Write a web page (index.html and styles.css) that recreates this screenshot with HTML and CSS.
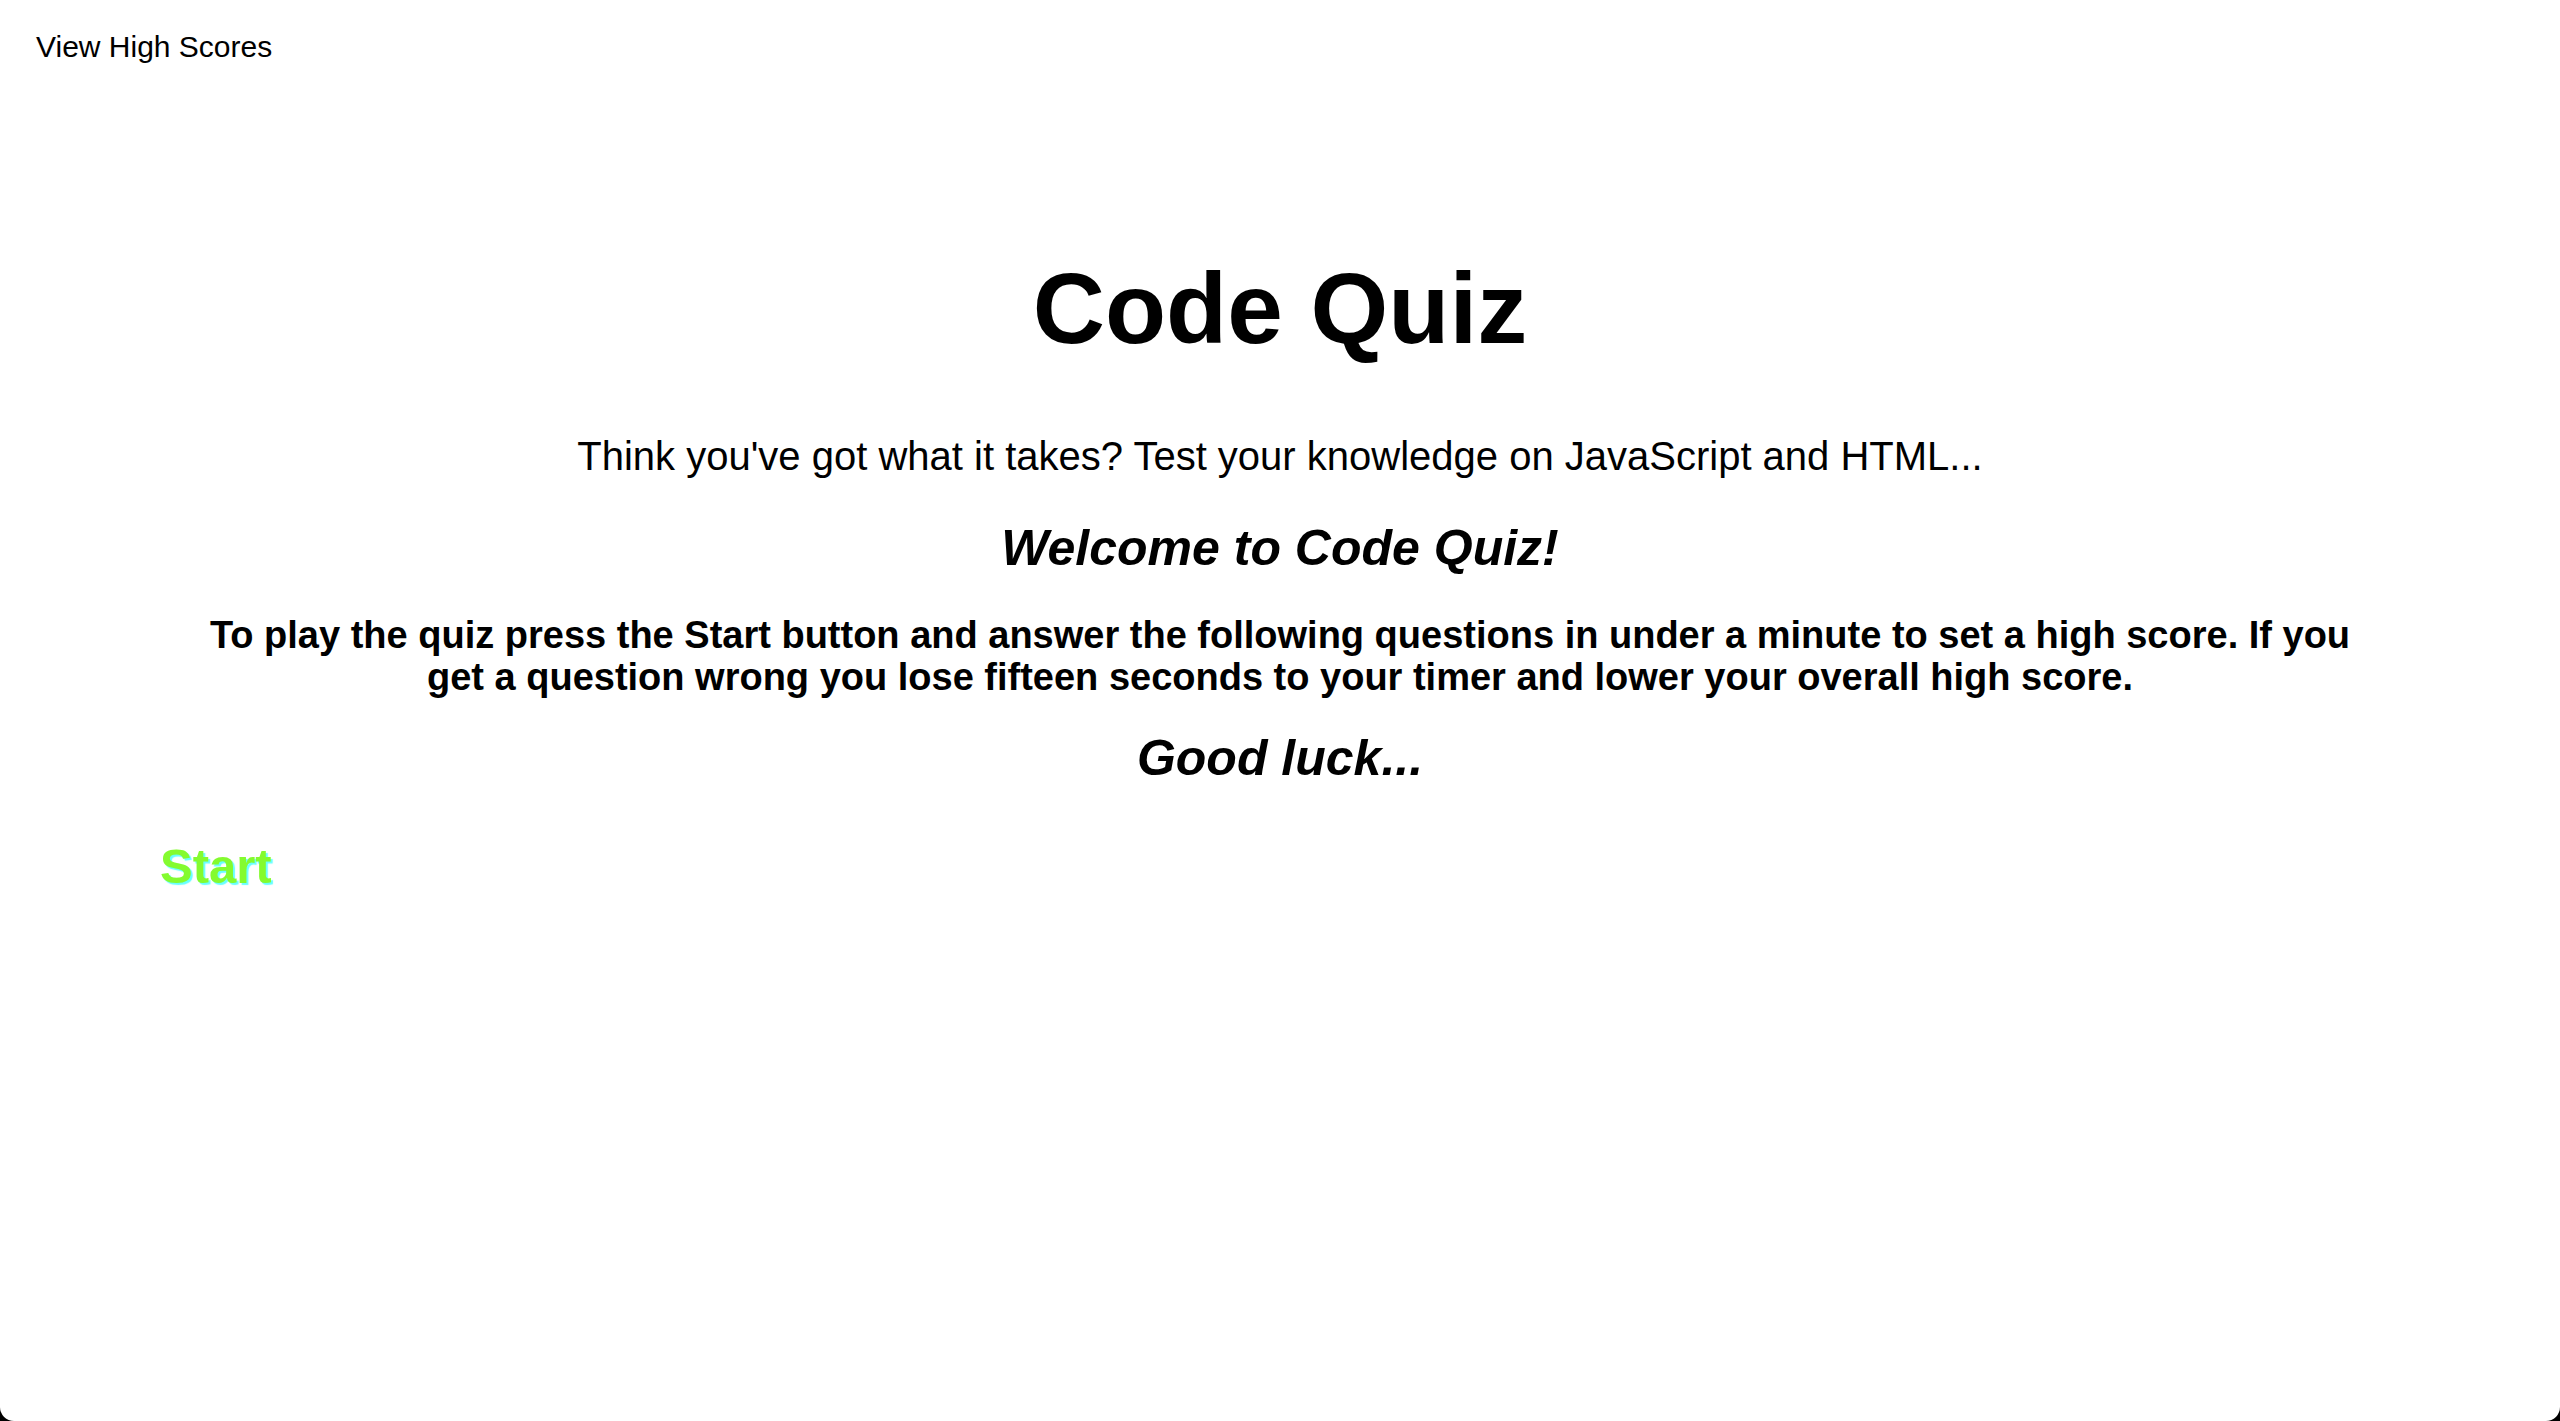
FILE: index.html
```html
<!DOCTYPE html>
<html lang="en">
<head>
<meta charset="utf-8">
<title>Code Quiz</title>
<link rel="stylesheet" href="styles.css">
</head>
<body>
<div class="page">
  <header class="topbar">
    <a class="scores-link" href="#">View High Scores</a>
  </header>
  <main class="quiz">
    <h1 class="title">Code Quiz</h1>
    <p class="tagline">Think you've got what it takes? Test your knowledge on JavaScript and HTML...</p>
    <h2 class="welcome">Welcome to Code Quiz!</h2>
    <p class="rules">To play the quiz press the Start button and answer the following questions in under a minute to set a high score. If you get a question wrong you lose fifteen seconds to your timer and lower your overall high score.</p>
    <h2 class="luck">Good luck...</h2>
    <div class="actions">
      <button class="start-btn" type="button">Start</button>
    </div>
  </main>
</div>
</body>
</html>
```

FILE: styles.css
```css
html, body {
  margin: 0;
  padding: 0;
  background: #000;
}

body {
  font-family: "Liberation Sans", Arial, Helvetica, sans-serif;
  color: #000;
}

.page {
  background: #fff;
  min-height: 100vh;
  border-radius: 0 0 14px 14px;
  overflow: hidden;
}

.topbar {
  padding: 30px 36px 0;
  font-size: 30px;
  line-height: 34px;
}

.scores-link {
  color: #000;
  text-decoration: none;
}

.quiz {
  text-align: center;
}

.title {
  margin: 189px 0 0;
  font-size: 100px;
  line-height: 110px;
  font-weight: bold;
}

.tagline {
  margin: 70px 0 0;
  font-size: 40px;
  line-height: 46px;
}

.welcome,
.luck {
  font-size: 50px;
  line-height: 58px;
  font-weight: bold;
  font-style: italic;
}

.welcome {
  margin: 40px 0 0;
}

.rules {
  width: 2170px;
  margin: 37px auto 0;
  font-size: 38px;
  line-height: 42px;
  font-weight: bold;
}

.luck {
  margin: 31px 0 0;
}

.actions {
  text-align: left;
  padding-left: 160px;
  margin-top: 50px;
}

.start-btn {
  display: block;
  background: none;
  border: 0;
  padding: 0;
  margin: 0;
  font-family: inherit;
  font-size: 49px;
  line-height: 58px;
  font-weight: bold;
  color: #84fb2f;
  text-shadow: 2px 2px 1px #66ffff;
  cursor: pointer;
}
```
